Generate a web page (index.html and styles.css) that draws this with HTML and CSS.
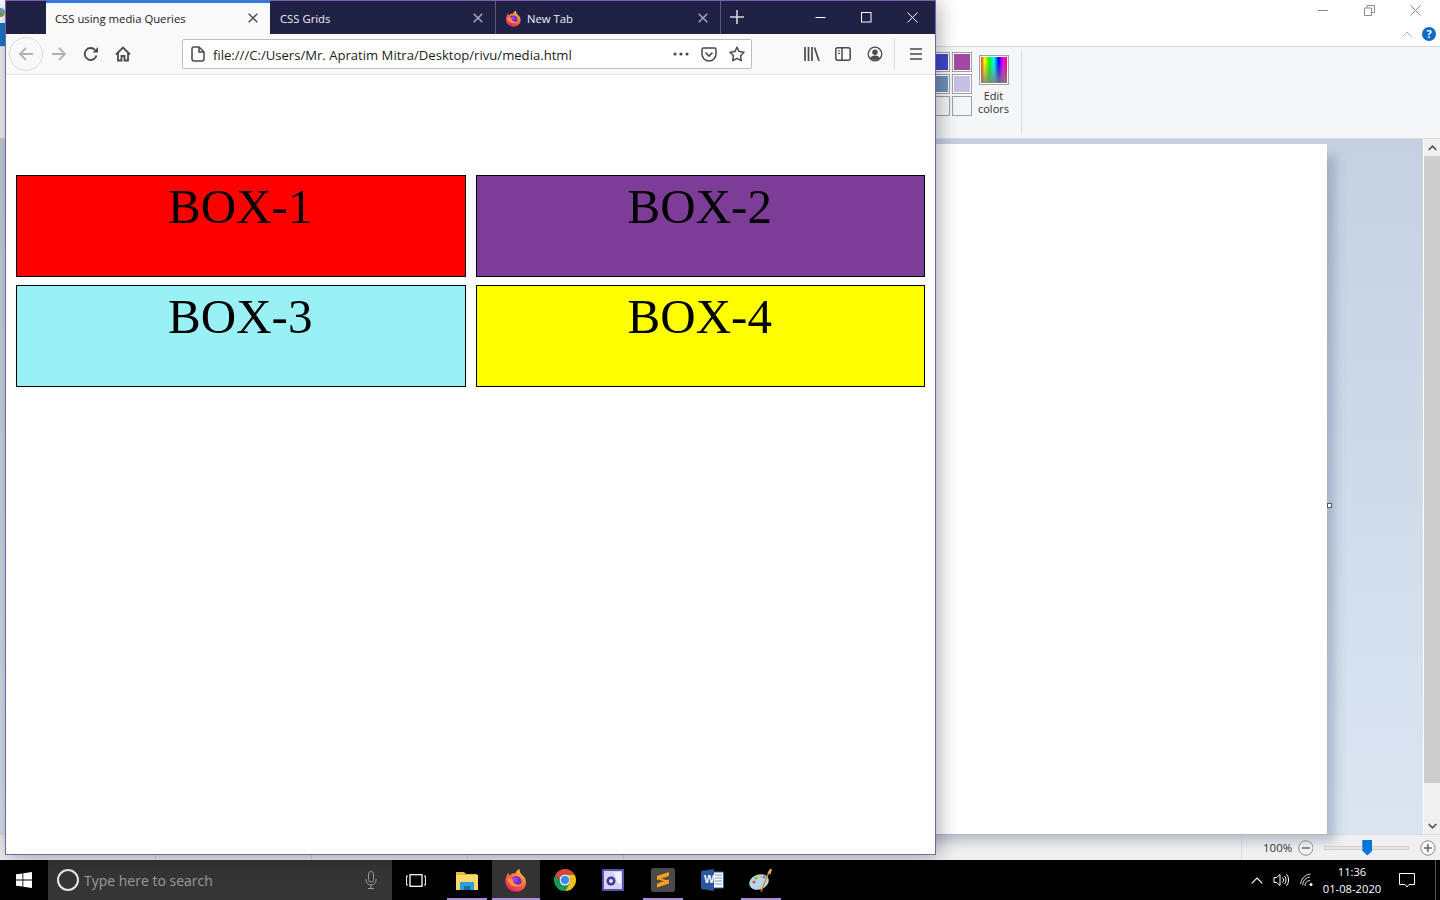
FILE: index.html
```html
<!DOCTYPE html>
<html lang="en">
<head>
    <meta charset="UTF-8">
    <title>CSS using media Queries</title>
    <link rel="stylesheet" href="styles.css">
</head>
<body>
    <div class="desktop">
        <!-- Paint window, behind the browser -->
        <div class="paint">
            <div class="paint-title">
                <span class="paint-app-icon"></span>
                <span class="paint-file-tab"></span>
                <div class="paint-controls">
                    <svg width="11" height="11" viewBox="0 0 11 11"><path d="M0 5.500h10" stroke="#8c8c8c" fill="none"/></svg>
                    <svg width="11" height="11" viewBox="0 0 11 11"><path d="M.5 3h7v7.500h-7zM3 3V.5h7.500v7H7.500" stroke="#8c8c8c" fill="none"/></svg>
                    <svg width="11" height="11" viewBox="0 0 11 11"><path d="M.5.5l10 10M10.500.5l-10 10" stroke="#8c8c8c" fill="none"/></svg>
                </div>
                <div class="paint-help">
                    <svg width="10" height="6" viewBox="0 0 10 6"><path d="M.5 5.500L5 1l4.500 4.500" stroke="#b0b0b0" fill="none"/></svg>
                    <span class="help-dot">?</span>
                </div>
            </div>
            <div class="ribbon">
                <div class="swatches">
                    <span class="swatch sw-blue"></span><span class="swatch sw-purple"></span>
                    <span class="swatch sw-steel"></span><span class="swatch sw-lilac"></span>
                    <span class="swatch"></span><span class="swatch"></span>
                </div>
                <div class="edit-colors">
                    <span class="rainbow"></span>
                    <span class="edit-label">Edit<br>colors</span>
                </div>
                <div class="ribbon-divider"></div>
            </div>
            <div class="canvas-area">
                <div class="canvas-view">
                    <div class="canvas-page"><span class="handle"></span></div>
                </div>
                <div class="scrollbar">
                    <span class="sb-btn"><svg width="9" height="6" viewBox="0 0 9 6"><path d="M.7 5L4.500 1.200 8.300 5" stroke="#505050" stroke-width="1.600" fill="none"/></svg></span>
                    <span class="sb-thumb"></span>
                    <span class="sb-btn"><svg width="9" height="6" viewBox="0 0 9 6"><path d="M.7 1l3.800 3.800L8.300 1" stroke="#505050" stroke-width="1.600" fill="none"/></svg></span>
                </div>
            </div>
            <div class="paint-status">
                <span class="status-cell"></span><span class="status-cell"></span><span class="status-cell"></span><span class="status-cell"></span>
                <div class="zoom-part">
                    <span class="zoom-value">100%</span>
                    <svg width="16" height="16" viewBox="0 0 16 16"><circle cx="8" cy="8" r="7.300" fill="#f5f5f5" stroke="#8a8a8a"/><path d="M4 8h8" stroke="#666" stroke-width="1.500"/></svg>
                    <span class="zoom-track"><span class="zoom-thumb"></span></span>
                    <svg width="16" height="16" viewBox="0 0 16 16"><circle cx="8" cy="8" r="7.300" fill="#f5f5f5" stroke="#8a8a8a"/><path d="M4 8h8M8 4v8" stroke="#666" stroke-width="1.500"/></svg>
                </div>
            </div>
        </div>

        <!-- Firefox window -->
        <div class="firefox">
            <div class="tabbar">
                <div class="tab tab-active">
                    <span class="tab-title">CSS using media Queries</span>
                    <svg class="tab-close" width="10" height="10" viewBox="0 0 10 10"><path d="M.7.7l8.600 8.600M9.300.7L.7 9.300" stroke="#4a4a4f" stroke-width="1.400" fill="none"/></svg>
                </div>
                <div class="tab">
                    <span class="tab-title">CSS Grids</span>
                    <svg class="tab-close" width="10" height="10" viewBox="0 0 10 10"><path d="M.7.7l8.600 8.600M9.300.7L.7 9.300" stroke="#a9abb8" stroke-width="1.400" fill="none"/></svg>
                </div>
                <div class="tab">
                    <svg class="tab-icon" width="17" height="17" viewBox="0 0 32 32">
                        <defs>
                            <linearGradient id="fx-outer" x1="0.8" y1="0" x2="0.2" y2="1">
                                <stop offset="0" stop-color="#ffd43b"/>
                                <stop offset="0.45" stop-color="#ff7139"/>
                                <stop offset="1" stop-color="#f5156c"/>
                            </linearGradient>
                        </defs>
                        <path d="M21 1c-1 5 2 7 5 10 4 4 4.500 11 1 15.500-5 6-15 6.500-21 1C1 23 .5 15 4 9.500 4.500 8 5 7 6 6c0 2 1 4 2 4 2-3 5-3.500 7-2.500 1-3 3-5 6-6.500z" fill="url(#fx-outer)"/>
                        <circle cx="16" cy="18" r="7.500" fill="#6e33c4"/>
                        <circle cx="14.500" cy="15.500" r="3.500" fill="#b833e1"/>
                        <path d="M4 13c1 7 6 12 13 12 5 0 8-3 9-6-2 3-6 4-9 3-4-1-6-4-5.500-8C8 15 6 15 4 13z" fill="#ff9a2e"/>
                    </svg>
                    <span class="tab-title">New Tab</span>
                    <svg class="tab-close" width="10" height="10" viewBox="0 0 10 10"><path d="M.7.7l8.600 8.600M9.300.7L.7 9.300" stroke="#a9abb8" stroke-width="1.400" fill="none"/></svg>
                </div>
                <div class="new-tab">
                    <svg width="14" height="14" viewBox="0 0 14 14"><path d="M7 0v14M0 7h14" stroke="#d4d5dc" stroke-width="1.600"/></svg>
                </div>
                <div class="win-controls">
                    <svg width="11" height="11" viewBox="0 0 11 11"><path d="M.5 5.500h10" stroke="#fff" fill="none"/></svg>
                    <svg width="11" height="11" viewBox="0 0 11 11"><rect x=".5" y=".5" width="9.500" height="9.500" stroke="#fff" fill="none"/></svg>
                    <svg width="11" height="11" viewBox="0 0 11 11"><path d="M.5.500l10 10M10.500.5l-10 10" stroke="#fff" fill="none"/></svg>
                </div>
            </div>
            <div class="toolbar">
                <span class="back-btn">
                    <svg width="16" height="16" viewBox="0 0 16 16"><path d="M15 8H2M8 2L2 8l6 6" stroke="#b1b1b3" stroke-width="1.800" fill="none"/></svg>
                </span>
                <span class="tool-btn">
                    <svg width="16" height="16" viewBox="0 0 16 16"><path d="M1 8h13M8 2l6 6-6 6" stroke="#b1b1b3" stroke-width="1.800" fill="none"/></svg>
                </span>
                <span class="tool-btn">
                    <svg width="16" height="16" viewBox="0 0 16 16"><path d="M13.500 9.500A6 6 0 1 1 12 3.800" stroke="#4a4a4f" stroke-width="1.800" fill="none"/><path d="M15 1v5.500H9.500z" fill="#4a4a4f"/></svg>
                </span>
                <span class="tool-btn">
                    <svg width="16" height="16" viewBox="0 0 16 16"><path d="M1 8.500l7-7 7 7M3 7v7.500h3.500V10h3v4.500H13V7" stroke="#4a4a4f" stroke-width="1.800" fill="none"/></svg>
                </span>
                <div class="urlbar">
                    <svg class="url-page" width="14" height="16" viewBox="0 0 14 16"><path d="M1 3a2 2 0 0 1 2-2h5l5 5v7a2 2 0 0 1-2 2H3a2 2 0 0 1-2-2zM8 1v5h5" stroke="#4a4a4f" stroke-width="1.500" fill="none"/></svg>
                    <span class="url-text">file:///C:/Users/Mr. Apratim Mitra/Desktop/rivu/media.html</span>
                    <svg class="url-dots" width="16" height="4" viewBox="0 0 16 4"><circle cx="2" cy="2" r="1.600" fill="#4a4a4f"/><circle cx="8" cy="2" r="1.600" fill="#4a4a4f"/><circle cx="14" cy="2" r="1.600" fill="#4a4a4f"/></svg>
                    <svg class="url-pocket" width="16" height="15" viewBox="0 0 16 15"><path d="M1 2.500A1.500 1.500 0 0 1 2.500 1h11A1.500 1.500 0 0 1 15 2.500V7a7 7 0 0 1-14 0z" stroke="#4a4a4f" stroke-width="1.500" fill="none"/><path d="M4.500 5.500L8 9l3.500-3.500" stroke="#4a4a4f" stroke-width="1.700" fill="none"/></svg>
                    <svg class="url-star" width="16" height="16" viewBox="0 0 16 16"><path d="M8 1.200l2.100 4.400 4.900.7-3.500 3.400.8 4.900L8 12.300l-4.300 2.300.8-4.900L1 6.300l4.900-.7z" stroke="#4a4a4f" stroke-width="1.500" fill="none" stroke-linejoin="round"/></svg>
                </div>
                <span class="tool-btn tools-start">
                    <svg width="16" height="14" viewBox="0 0 16 14"><path d="M1 0v14M4.500 0v14M8 0v14M10.500.5l4.500 13.500" stroke="#4a4a4f" stroke-width="1.700" fill="none"/></svg>
                </span>
                <span class="tool-btn">
                    <svg width="16" height="14" viewBox="0 0 16 14"><rect x=".8" y=".8" width="14.400" height="12.400" rx="2" stroke="#4a4a4f" stroke-width="1.500" fill="none"/><path d="M7 1v12" stroke="#4a4a4f" stroke-width="1.500"/><path d="M3 4h2M3 6.500h2" stroke="#4a4a4f" stroke-width="1.200"/></svg>
                </span>
                <span class="tool-btn">
                    <svg width="16" height="16" viewBox="0 0 16 16"><circle cx="8" cy="8" r="6.800" stroke="#4a4a4f" stroke-width="1.300" fill="none"/><circle cx="8" cy="6.300" r="2.700" fill="#4a4a4f"/><path d="M3.200 12a5 3.600 0 0 1 9.600 0A6.500 6.500 0 0 1 3.200 12z" fill="#4a4a4f"/></svg>
                </span>
                <span class="tool-sep"></span>
                <span class="tool-btn menu-btn">
                    <svg width="12" height="12" viewBox="0 0 12 12"><path d="M0 1h12M0 6h12M0 11h12" stroke="#4a4a4f" stroke-width="1.600"/></svg>
                </span>
            </div>
            <div class="page-content">
                <div class="box box-1">BOX-1</div>
                <div class="box box-2">BOX-2</div>
                <div class="box box-3">BOX-3</div>
                <div class="box box-4">BOX-4</div>
            </div>
        </div>
    </div>

    <!-- Windows taskbar -->
    <div class="taskbar">
        <div class="start">
            <svg width="16" height="16" viewBox="0 0 16 16"><path d="M0 2.300l6.500-.9v6.200H0zM7.300 1.300L16 0v7.600H7.300zM0 8.400h6.500v6.200L0 13.700zM7.300 8.400H16V16l-8.700-1.200z" fill="#fff"/></svg>
        </div>
        <div class="search">
            <span class="cortana"></span>
            <span class="search-text">Type here to search</span>
            <svg class="mic" width="12" height="18" viewBox="0 0 12 18"><rect x="3.500" y=".5" width="5" height="10.500" rx="2.500" stroke="#9a9a9a" fill="none"/><path d="M1 8v1a5 5 0 0 0 10 0V8M6 14v3.500M3 17.500h6" stroke="#9a9a9a" fill="none"/></svg>
        </div>
        <span class="task-view">
            <svg width="20" height="13" viewBox="0 0 20 13"><rect x="4" y=".7" width="12" height="11.600" stroke="#fff" stroke-width="1.300" fill="none"/><path d="M2 2H.6v9H2M18 2h1.400v9H18" stroke="#fff" fill="none"/></svg>
        </span>
        <div class="task-item item-open item-explorer">
            <svg width="22" height="19" viewBox="0 0 22 19"><path d="M0 1h8l2 2h11v3H0z" fill="#e8b93f"/><path d="M0 4h22v15H0z" fill="#fbd86b"/><path d="M4 11h14v8h-4v-4H8v4H4z" fill="#2aa1dc"/><path d="M8 15h6v4H8z" fill="#1b6fa8"/></svg>
        </div>
        <div class="task-item item-active">
            <svg width="24" height="24" viewBox="0 0 32 32">
                <path d="M21 1c-1 5 2 7 5 10 4 4 4.500 11 1 15.500-5 6-15 6.500-21 1C1 23 .5 15 4 9.500 4.500 8 5 7 6 6c0 2 1 4 2 4 2-3 5-3.500 7-2.500 1-3 3-5 6-6.500z" fill="url(#fx-outer)"/>
                <circle cx="16" cy="18" r="7.500" fill="#6e33c4"/>
                <circle cx="14.500" cy="15.500" r="3.500" fill="#b833e1"/>
                <path d="M4 13c1 7 6 12 13 12 5 0 8-3 9-6-2 3-6 4-9 3-4-1-6-4-5.500-8C8 15 6 15 4 13z" fill="#ff9a2e"/>
            </svg>
        </div>
        <div class="task-item item-chrome">
            <svg width="24" height="24" viewBox="0 0 24 24">
                <path d="M12 6.500H21.530A11 11 0 0 0 2.470 6.500L7.240 14.750A5.500 5.500 0 0 1 12 6.500z" fill="#db4437"/>
                <path d="M16.760 14.750L12 23A11 11 0 0 0 21.530 6.500H12A5.500 5.500 0 0 1 16.760 14.750z" fill="#f4c20d"/>
                <path d="M7.240 14.750L2.470 6.500A11 11 0 0 0 12 23L16.760 14.750A5.500 5.500 0 0 1 7.240 14.750z" fill="#0f9d58"/>
                <circle cx="12" cy="12" r="5.500" fill="#fff"/>
                <circle cx="12" cy="12" r="4.300" fill="#4285f4"/>
            </svg>
        </div>
        <div class="task-item item-vs">
            <svg width="22" height="22" viewBox="0 0 22 22">
                <rect x="1" y="1" width="20" height="20" fill="#d5d4f2" stroke="#5a55a8" stroke-width="2"/>
                <path d="M12 3h7v12l-4-2z" fill="#f2f2fb"/>
                <circle cx="9" cy="12" r="4.500" fill="#3c3a96"/>
                <circle cx="9" cy="12" r="2" fill="#e3e3f5"/>
            </svg>
        </div>
        <div class="task-item item-open">
            <svg width="24" height="24" viewBox="0 0 24 24">
                <rect width="24" height="24" rx="2" fill="#4a4a4a"/>
                <path d="M18 4v4L6 12V8zM18 11.500v4l-12 4v-4zM6 9l12 4-3 1-9-3z" fill="#fa9f17"/>
            </svg>
        </div>
        <div class="task-item">
            <svg width="23" height="22" viewBox="0 0 23 22">
                <path d="M9 3h13.500v16H9z" fill="#fff" stroke="#2b579a"/>
                <path d="M14 6h7M14 9h7M14 12h7M14 15h7" stroke="#6d8fc4"/>
                <path d="M0 2l13-2v22L0 20z" fill="#2b579a"/>
            </svg>
            <span class="word-w">W</span>
        </div>
        <div class="task-item item-open">
            <svg width="24" height="24" viewBox="0 0 24 24">
                <ellipse cx="10" cy="14" rx="10" ry="7.500" fill="#b9d6e8" transform="rotate(-20 10 14)"/>
                <circle cx="5" cy="14" r="1.600" fill="#e2574c"/>
                <circle cx="7" cy="10" r="1.600" fill="#6dbb5a"/>
                <circle cx="11" cy="8.500" r="1.600" fill="#f2c230"/>
                <circle cx="15" cy="9" r="1.500" fill="#4a90d0"/>
                <path d="M12 23.500L20 4" stroke="#d98a2b" stroke-width="1.500"/>
                <path d="M18.500 4.500l3-4 1.500 1-1.500 5z" fill="#e3a95c"/>
            </svg>
        </div>
        <div class="tray">
            <svg width="12" height="7" viewBox="0 0 12 7"><path d="M.7 6.300L6 1l5.300 5.300" stroke="#fff" stroke-width="1.200" fill="none"/></svg>
            <svg class="tray-sound" width="17" height="14" viewBox="0 0 17 14"><path d="M1 4.500h2.500L7 1.500v11l-3.500-3H1z" stroke="#fff" fill="none"/><path d="M9.500 4.500a3.500 3.500 0 0 1 0 5M11.500 3a6 6 0 0 1 0 8M13.500 1.200a9 9 0 0 1 0 11.600" stroke="#fff" fill="none"/></svg>
            <svg class="tray-wifi" width="14" height="14" viewBox="0 0 14 14"><path d="M.5 11a11 11 0 0 1 10-10M2.700 12a8 8 0 0 1 7.300-8M5 13a5 5 0 0 1 5-5.500" stroke="#d8d8d8" fill="none"/><circle cx="11" cy="11.500" r="1.500" fill="#fff"/></svg>
            <div class="clock"><span>11:36</span><span>01-08-2020</span></div>
            <svg class="tray-action" width="16" height="15" viewBox="0 0 16 15"><path d="M.5.500h15v11H10l-2 2.500-2-2.500H.5z" stroke="#fff" fill="none"/></svg>
            <span class="show-desktop"></span>
        </div>
    </div>
</body>
</html>
```

FILE: styles.css
```css
* {
    box-sizing: border-box;
}

body {
    margin: 0;
    width: 1440px;
    height: 900px;
    overflow: hidden;
    display: flex;
    flex-direction: column;
    font-family: "Open Sans", "Noto Sans", sans-serif;
    background-color: #fff;
}

.desktop {
    position: relative;
    height: 860px;
}

/* Paint, fills the desktop */
.paint {
    height: 100%;
    display: flex;
    flex-direction: column;
    background-color: #fff;
}
.paint-title {
    height: 47px;
    position: relative;
    border-bottom: 1px solid #dadbdc;
}
.paint-app-icon {
    position: absolute;
    left: -4px;
    top: 8px;
    width: 9px;
    height: 9px;
    border-radius: 50%;
    background: conic-gradient(#5aa7d8, #6dbb5a, #e2574c, #5aa7d8);
}
.paint-file-tab {
    position: absolute;
    left: 0;
    top: 23px;
    width: 6px;
    height: 23px;
    background-color: #1979ca;
}
.paint-controls {
    display: flex;
    justify-content: flex-end;
    gap: 35px;
    padding: 5px 19px 0 0;
}
.paint-help {
    position: absolute;
    right: 4px;
    top: 27px;
    display: flex;
    align-items: center;
    gap: 10px;
}
.help-dot {
    width: 14px;
    height: 14px;
    border-radius: 50%;
    background-color: #0a6cc4;
    color: #fff;
    font-size: 11px;
    font-weight: 700;
    line-height: 14px;
    text-align: center;
}
.ribbon {
    height: 92px;
    background-color: #f5f6f7;
    border-bottom: 1px solid #dadbdc;
    display: flex;
    padding-left: 930px;
}
.swatches {
    display: grid;
    grid-template-columns: 20px 20px;
    grid-auto-rows: 20px;
    gap: 2px;
    padding-top: 5px;
    margin-right: 7px;
}
.swatch {
    border: 1px solid #a0a0a0;
    background-color: #f5f6f7;
    background-clip: padding-box;
}
.sw-blue { background-color: #3f48cc; box-shadow: inset 0 0 0 1px #fff; }
.sw-purple { background-color: #a349a4; box-shadow: inset 0 0 0 1px #fff; }
.sw-steel { background-color: #7092be; box-shadow: inset 0 0 0 1px #fff; }
.sw-lilac { background-color: #c8bfe7; box-shadow: inset 0 0 0 1px #fff; }
.edit-colors {
    width: 30px;
    display: flex;
    flex-direction: column;
    align-items: center;
    padding-top: 8px;
}
.rainbow {
    width: 30px;
    height: 30px;
    flex: none;
    border: 1px solid #a0a0a0;
    box-shadow: inset 0 0 0 1px #fff;
    background:
        linear-gradient(to bottom, rgba(128,128,128,0) 20%, rgba(128,128,128,.9) 100%),
        linear-gradient(to right, #ff0000, #ffff00, #00ff00, #00ffff, #0000ff, #ff00ff, #ff0000);
}
.edit-label {
    margin-top: 4px;
    margin-right: 1px;
    font-size: 11px;
    line-height: 13px;
    text-align: center;
    color: #333;
    white-space: nowrap;
}
.ribbon-divider {
    width: 1px;
    height: 86px;
    margin: 2px 0 0 12px;
    background-color: #dfe0e1;
}
.canvas-area {
    flex: 1;
    display: flex;
    min-height: 0;
    background: linear-gradient(to bottom, #c5d0e1, #dbe5f2);
}
.canvas-view {
    flex: 1;
    padding: 5px 0 0 20px;
}
.canvas-page {
    width: 1307px;
    height: 100%;
    position: relative;
    background-color: #fff;
    box-shadow: 10px 10px 10px -2px rgba(90,110,140,.35);
}
.handle {
    position: absolute;
    right: -5px;
    top: 359px;
    width: 5px;
    height: 5px;
    border: 1px solid #555;
    background-color: #fff;
}
.scrollbar {
    width: 17px;
    display: flex;
    flex-direction: column;
    background-color: #f0f0f0;
    border-left: 1px solid #fff;
}
.sb-btn {
    height: 17px;
    display: flex;
    align-items: center;
    justify-content: center;
    flex: none;
}
.sb-thumb {
    height: 627px;
    background-color: #cdcdcd;
    margin-bottom: auto;
}
.paint-status {
    height: 26px;
    flex: none;
    display: flex;
    background-color: #f0f0f0;
    border-top: 1px solid #dadbdc;
}
.status-cell {
    width: 156px;
    border-right: 1px solid #d8d8d8;
    margin-top: 18px;
}
.zoom-part {
    margin-left: auto;
    width: 199px;
    display: flex;
    align-items: center;
    border-left: 1px solid #dcdcdc;
    padding: 0 4px 0 21px;
}
.zoom-value {
    font-size: 11.5px;
    color: #333;
    width: 35px;
}
.zoom-track {
    width: 86px;
    height: 4px;
    margin: 0 11px;
    position: relative;
    background-color: #e4e4e4;
    border: 1px solid #d0d0d0;
}
.zoom-thumb {
    position: absolute;
    left: 37px;
    top: -7px;
    width: 10px;
    height: 16px;
    background-color: #0078d7;
    clip-path: polygon(0 0, 100% 0, 100% 70%, 50% 100%, 0 70%);
}

/* Firefox window, floats over Paint */
.firefox {
    position: absolute;
    left: 5px;
    top: 0;
    width: 931px;
    height: 855px;
    border: 1px solid #7b5fb3;
    box-shadow: 2px 2px 20px rgba(0,0,0,.35);
    display: flex;
    flex-direction: column;
    background-color: #fff;
}
.tabbar {
    height: 33px;
    flex: none;
    display: flex;
    padding-left: 40px;
    background-color: #1f2244;
}
.tab {
    width: 225px;
    display: flex;
    align-items: center;
    padding: 1px 12px 0 9px;
    color: #f0f0f5;
    font-size: 11.3px;
    border-right: 1px solid #5a5c76;
}
.tab-active {
    width: 224px;
    margin-right: 1px;
    padding: 0 12px 1px 9px;
    color: #1c1c1c;
    background-color: #f9f9fa;
    border-right: 0;
    border-top: 2px solid #0a84ff;
}
.tab-icon {
    margin-right: 5px;
}
.tab-title {
    flex: 1;
    white-space: nowrap;
}
.new-tab {
    width: 32px;
    padding-bottom: 1px;
    display: flex;
    align-items: center;
    justify-content: center;
}
.win-controls {
    margin-left: auto;
    display: flex;
    align-items: center;
    gap: 35px;
    padding-right: 17px;
}
.toolbar {
    height: 41px;
    flex: none;
    display: flex;
    align-items: center;
    background-color: #f9f9fa;
    border-bottom: 1px solid #e1e1e3;
}
.back-btn {
    width: 34px;
    height: 34px;
    margin-left: 3px;
    border: 1px solid #dcdcde;
    border-radius: 50%;
    display: flex;
    align-items: center;
    justify-content: center;
}
.tool-btn {
    width: 32px;
    display: flex;
    justify-content: center;
}
.tools-start {
    margin-left: 44px;
    margin-right: -1px;
}
.tool-sep {
    width: 1px;
    height: 32px;
    margin-left: 3px;
    background-color: #dcdcde;
}
.menu-btn {
    margin-left: 5px;
}
.urlbar {
    width: 570px;
    height: 30px;
    margin-left: 43px;
    display: flex;
    align-items: center;
    padding: 0 6px 0 8px;
    background-color: #fff;
    border: 1px solid #bebebe;
    border-radius: 2px;
}
.url-text {
    margin-left: 8px;
    padding-top: 2px;
    font-size: 13.1px;
    color: #1c1c1c;
    white-space: nowrap;
}
.url-dots {
    margin-left: auto;
}
.url-pocket {
    margin-left: 12px;
}
.url-star {
    margin-left: 12px;
}
.page-content {
    padding: 100px 10px 0;
    display: grid;
    grid-template-columns: 1fr 1fr;
    grid-auto-rows: 102px;
    column-gap: 10px;
    row-gap: 8px;
    background-color: #fff;
}
.box {
    border: 1px solid #000;
    padding-top: 2px;
    padding-right: 1px;
    font-family: "Liberation Serif", serif;
    font-size: 49px;
    text-align: center;
    color: #000;
}
.box-1 { background-color: #ff0000; }
.box-2 { background-color: #7d3c98; }
.box-3 { background-color: #99f1f5; }
.box-4 { background-color: #ffff00; }

/* Taskbar */
.taskbar {
    height: 40px;
    flex: none;
    display: flex;
    align-items: stretch;
    background-color: #000;
}
.start {
    width: 48px;
    display: flex;
    align-items: center;
    justify-content: center;
}
.search {
    width: 344px;
    display: flex;
    align-items: center;
    padding: 0 15px 0 9px;
    background-color: #353535;
}
.cortana {
    width: 22px;
    height: 22px;
    border: 2.5px solid #e8e8e8;
    border-radius: 50%;
}
.search-text {
    margin-left: 5px;
    font-size: 14px;
    color: #9b9b9b;
}
.mic {
    margin-left: auto;
}
.task-view {
    width: 48px;
    margin-right: 7px;
    display: flex;
    align-items: center;
    justify-content: center;
}
.task-item {
    width: 40px;
    position: relative;
    display: flex;
    align-items: center;
    justify-content: center;
    margin-right: 9px;
}
.item-open {
    border-bottom: 2px solid #a98bdc;
    padding-top: 2px;
}
.item-explorer {
    margin-right: 5px;
}
.item-active {
    width: 48px;
    margin-right: 5px;
    background-color: #333;
    border-bottom: 2px solid #a98bdc;
    padding-top: 2px;
}
.item-chrome {
    margin-right: 8px;
}
.item-vs {
    margin-right: 10px;
}
.word-w {
    position: absolute;
    left: 12px;
    top: 13px;
    font-family: "Liberation Sans", sans-serif;
    font-size: 11px;
    font-weight: 700;
    color: #fff;
}
.tray {
    margin-left: auto;
    display: flex;
    align-items: center;
    color: #fff;
}
.tray-sound {
    margin-left: 10px;
}
.tray-wifi {
    margin-left: 10px;
}
.clock {
    width: 70px;
    margin-left: 3px;
    display: flex;
    flex-direction: column;
    align-items: center;
    font-size: 11.2px;
    line-height: 17px;
}
.tray-action {
    margin-left: 12px;
}
.show-desktop {
    width: 1px;
    height: 40px;
    margin: 0 4px 0 20px;
    background-color: #555;
}
```
